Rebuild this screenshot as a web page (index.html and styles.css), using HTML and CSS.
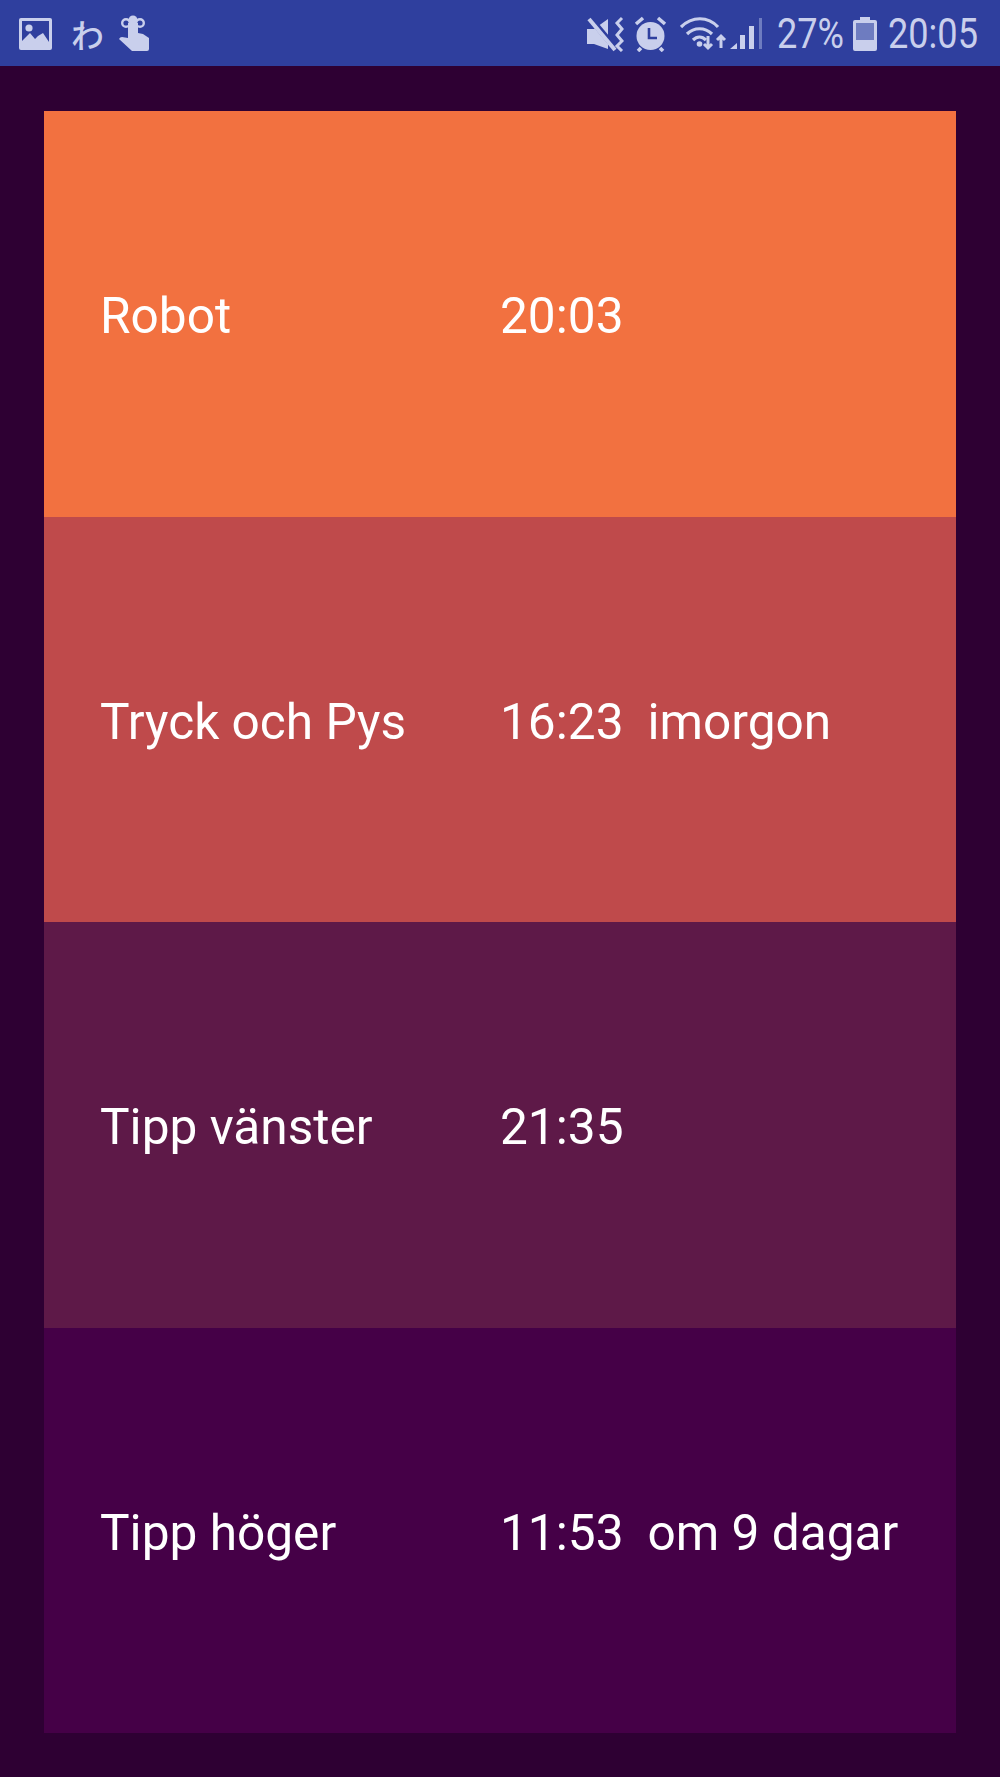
FILE: index.html
```html
<!DOCTYPE html>
<html lang="sv">
<head>
<meta charset="utf-8">
<title>Tider</title>
<link rel="stylesheet" href="styles.css">
</head>
<body>
<div class="status">
  <div class="status-left">
    <svg class="ic-image" viewBox="0 0 33 32"><path fill="#c9cfec" d="M2 0h29a2 2 0 0 1 2 2v28a2 2 0 0 1-2 2H2a2 2 0 0 1-2-2V2a2 2 0 0 1 2-2z"/><path fill="#2f3f9e" d="M3 3h27v21l-6-9-5 3-3 3-5-6-8 8z"/><circle cx="10" cy="10" r="3.6" fill="#c9cfec"/></svg>
    <span class="wa">わ</span>
    <svg class="ic-hand" viewBox="0 0 32 38"><path fill="#c9cfec" d="M9 8h10v10l5 1 6 4v11a2 2 0 0 1-2 2H13L0 24q1-2 3-2l6 1z"/><circle cx="14" cy="5" r="4.500" fill="#c9cfec"/><circle cx="7" cy="8" r="3.800" fill="none" stroke="#c9cfec" stroke-width="2.400"/><circle cx="21" cy="8" r="3.800" fill="none" stroke="#c9cfec" stroke-width="2.400"/></svg>
  </div>
  <div class="status-right">
    <svg class="ic-mute" viewBox="0 0 37 36"><path fill="#c9cfec" d="M0 13h7L21 3v30L7 28H0z"/><path stroke="#2f3f9e" stroke-width="6" d="M3 2l26 31"/><path stroke="#c9cfec" stroke-width="4" d="M2 3l26 31"/><path fill="none" stroke="#c9cfec" stroke-width="3" d="M35 2l-5 5 5 6-5 6 5 6-5 5 5 5"/></svg>
    <svg class="ic-alarm" viewBox="0 0 33 36"><circle cx="16.500" cy="20" r="14" fill="#c9cfec"/><path fill="none" stroke="#2f3f9e" stroke-width="2.600" d="M15 12v10h8"/><path stroke="#c9cfec" stroke-width="3.600" d="M2 8l7-6M31 8l-7-6M7 32l-3 3M26 32l3 3"/></svg>
    <svg class="ic-wifi" viewBox="0 0 47 36"><g fill="none" stroke="#c9cfec" stroke-width="3.200"><path d="M1 11C12 0 28 0 38 11"/><path d="M7 18c7-7 18-7 25 0"/><path d="M13 24c4-4 9-4 13 0"/></g><circle cx="19.500" cy="28" r="2.800" fill="#c9cfec"/><path fill="none" stroke="#c9cfec" stroke-width="3" d="M28 20v12M24 28l4 4 4-4M41 32V20M37 24l4-4 4 4"/></svg>
    <svg class="ic-signal" viewBox="0 0 33 36"><path fill="#c9cfec" d="M0 33l7-6v6zM10 19h5v14h-5zM19 10h5v23h-5z"/><path fill="#6e7cc0" d="M29 2h3v31h-3z"/></svg>
    <span class="stat-text pct">27%</span>
    <svg class="ic-battery" viewBox="0 0 24 34"><path fill="#c9cfec" d="M7 0h10v3h5a2 2 0 0 1 2 2v27a2 2 0 0 1-2 2H2a2 2 0 0 1-2-2V5a2 2 0 0 1 2-2h5z"/><path fill="#6e7cc0" d="M3 6h18v17H3z"/></svg>
    <span class="stat-text clock">20:05</span>
  </div>
</div>
<main class="board">
  <section class="row row-orange"><span class="name">Robot</span><span class="time">20:03</span></section>
  <section class="row row-red"><span class="name">Tryck och Pys</span><span class="time">16:23</span><span class="note">imorgon</span></section>
  <section class="row row-plum"><span class="name">Tipp vänster</span><span class="time">21:35</span></section>
  <section class="row row-purple"><span class="name">Tipp höger</span><span class="time">11:53</span><span class="note">om 9 dagar</span></section>
</main>
</body>
</html>
```
FILE: styles.css
```css
html, body { margin: 0; height: 100%; }
body {
  width: 1000px;
  height: 1777px;
  background: #2e0033;
  font-family: Roboto, "Noto Sans CJK JP", sans-serif;
  display: flex;
  flex-direction: column;
  overflow: hidden;
}
.status {
  height: 66px;
  box-sizing: border-box;
  flex: none;
  background: #2f3f9e;
  display: flex;
  justify-content: space-between;
  align-items: center;
  padding: 2px 22px 0 19px;
  color: #c9cfec;
}
.status-left, .status-right { display: flex; align-items: center; }
.ic-image { width: 33px; height: 32px; margin-right: 19px; }
.wa { font-family: "Noto Sans CJK JP", sans-serif; font-size: 33px; font-weight: 500; line-height: 36px; width: 33px; margin-right: 15px; }
.ic-hand { width: 32px; height: 38px; }
.ic-mute { width: 37px; height: 36px; margin-right: 10px; }
.ic-alarm { width: 33px; height: 36px; margin-right: 13px; }
.ic-wifi { width: 47px; height: 36px; margin-right: 3px; }
.ic-signal { width: 33px; height: 36px; margin-right: 14px; }
.ic-battery { width: 24px; height: 34px; margin: 0 11px; }
.stat-text { font-size: 42px; line-height: 50px; transform: scaleX(.86); transform-origin: left center; }
.pct { width: 65px; }
.clock { width: 90px; }
.board {
  flex: 1;
  display: flex;
  flex-direction: column;
  padding: 45px 44px 44px;
}
.row {
  flex: 1;
  display: flex;
  align-items: center;
  padding: 5px 0 0 56px;
  color: #fff;
  font-size: 49.6px;
  line-height: 56px;
}
.name { width: 400px; flex: none; }
.note { margin-left: 24px; }
.row-orange { background: #f27140; }
.row-red { background: #bf4a4b; }
.row-plum { background: #5e1948; }
.row-purple { background: #450047; }
```
